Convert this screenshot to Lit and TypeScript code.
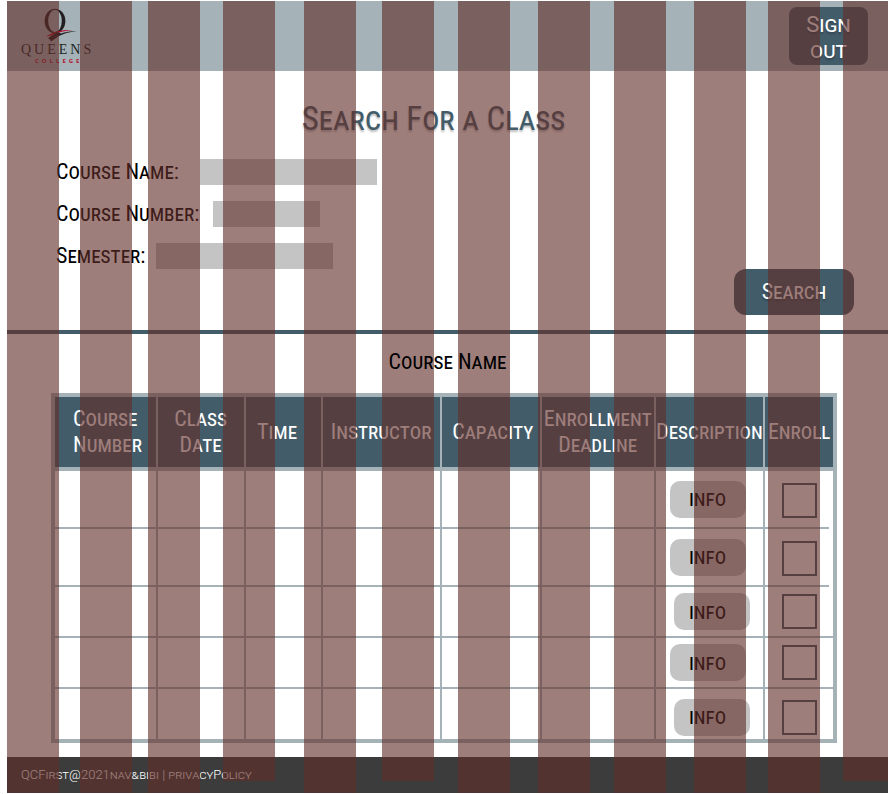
import { LitElement, html, css, svg } from "lit";
import { customElement, state } from "lit/decorators.js";

interface Row {
  height: "tall" | "short";
  nudge: boolean;
  open: boolean;
}

const COLUMNS = [
  { label: "Course Number", cls: "c-number" },
  { label: "Class Date", cls: "c-date" },
  { label: "Time", cls: "c-time" },
  { label: "Instructor", cls: "c-instructor" },
  { label: "Capacity", cls: "c-capacity" },
  { label: "Enrollment Deadline", cls: "c-deadline" },
  { label: "Description", cls: "c-description" },
  { label: "Enroll", cls: "c-enroll" },
];

const ROWS: Row[] = [
  { height: "tall", nudge: false, open: true },
  { height: "tall", nudge: false, open: true },
  { height: "short", nudge: true, open: false },
  { height: "short", nudge: false, open: false },
  { height: "short", nudge: true, open: false },
];

/* Twelve layout columns; true marks one that stops above the page end. */
const GUIDES = [false, false, false, true, false, true, false, false, false, false, false, true];

@customElement("qc-logo")
export class QcLogo extends LitElement {
  static styles = css`
    :host {
      display: block;
      width: 76px;
    }
    svg {
      display: block;
      width: 100%;
    }
    .ring {
      fill: #231f20;
      fill-rule: evenodd;
    }
    .queens {
      font: 14px "Liberation Serif", serif;
      letter-spacing: 3px;
      fill: #231f20;
    }
    .college {
      font: bold 6px "Open Sans", sans-serif;
      letter-spacing: 3px;
      fill: #b3122f;
    }
  `;

  render() {
    return html`<svg viewBox="0 0 76 60" role="img" aria-label="Queens College">
      ${svg`
        <path
          class="ring"
          d="M23.6 14 a10.4 12.2 0 1 0 20.8 0 a10.4 12.2 0 1 0 -20.8 0 Z
             M27.2 14 a6.8 11.2 0 1 1 13.6 0 a6.8 11.2 0 1 1 -13.6 0 Z"
        />
        <path d="M25 29.5 Q38 21 52 23.5 Q40 23.5 31 28.5 Q28 29 25 29.5 Z" fill="#b3122f" />
        <path d="M27 31 Q32 28 36 25 L40 26.5 Q46 24 56 24 Q44 25.5 38 29 L30 34.5 Q29 32 27 31 Z" fill="#231f20" />
        <text class="queens" x="0" y="47">QUEENS</text>
        <text class="college" x="14" y="56">COLLEGE</text>
      `}
    </svg>`;
  }
}

@customElement("app-root")
export class AppRoot extends LitElement {
  @state() private enrolled = ROWS.map(() => false);

  static styles = css`
    :host {
      display: block;
      padding: 1px 6px 0 7px;
      background: #fff;
      color: #000;
      font: 22px/28px "Roboto Condensed", "Roboto", sans-serif;
      font-variant: small-caps;
      --slate: #435c6a;
      --mist: #a5b2b8;
      --grey: #c4c4c4;
    }
    * {
      box-sizing: border-box;
    }
    button,
    input {
      font: inherit;
      margin: 0;
      border: 0;
    }
    button {
      cursor: pointer;
    }
    .page {
      position: relative;
      overflow: hidden;
    }
    header {
      display: flex;
      justify-content: space-between;
      align-items: flex-start;
      height: 70px;
      padding: 6px 20px 0 14px;
      background: var(--mist);
    }
    .solid {
      background: var(--slate);
      color: #fff;
      text-shadow: 0 2px 2px rgba(0, 0, 0, 0.25);
    }
    .sign-out {
      width: 79px;
      height: 58px;
      padding: 4px 14px 0;
      border-radius: 8px;
      font-family: "Roboto", sans-serif;
      line-height: 26px;
    }
    h1 {
      margin: 0;
      padding-top: 28px;
      padding-right: 28px;
      color: var(--slate);
      font-size: 33px;
      font-weight: 400;
      line-height: 40px;
      text-align: center;
      text-shadow: 0 2px 2px rgba(0, 0, 0, 0.25);
    }
    form {
      display: flex;
      justify-content: space-between;
      align-items: flex-end;
      height: 195px;
      padding: 0 34px 15px 49px;
      border-bottom: 4px solid var(--slate);
    }
    .fields {
      display: flex;
      flex-direction: column;
      gap: 16px;
      align-self: flex-start;
      padding-top: 20px;
    }
    .field {
      display: flex;
      align-items: center;
      height: 26px;
    }
    .field input {
      width: 177px;
      height: 26px;
      padding: 0 6px;
      background: var(--grey);
    }
    .field .short {
      width: 107px;
    }
    .name {
      gap: 21px;
    }
    .number {
      gap: 14px;
    }
    .semester {
      gap: 11px;
    }
    .search {
      width: 120px;
      height: 46px;
      border-radius: 12px;
    }
    h2 {
      position: relative;
      z-index: 2;
      margin: 0;
      padding: 14px 0 17px;
      font-size: 22px;
      font-weight: 400;
      line-height: 28px;
      text-align: center;
    }
    .results {
      margin: 0 51px 14px 44px;
    }
    table {
      width: 100%;
      table-layout: fixed;
      border-spacing: 0;
      border: 4px solid var(--mist);
    }
    th,
    td {
      padding: 0;
      border-right: 2px solid var(--mist);
      text-align: center;
      vertical-align: middle;
    }
    th {
      height: 74px;
      border-bottom: 4px solid var(--mist);
      background: var(--slate);
      color: #fff;
      font-weight: 400;
      line-height: 26px;
    }
    td {
      border-bottom: 2px solid var(--mist);
    }
    th:last-child,
    td:last-child {
      border-right: 0;
    }
    .open td:last-child {
      border-bottom: 0;
      background: linear-gradient(var(--mist), var(--mist)) left bottom / calc(100% - 4px) 2px
        no-repeat;
    }
    .tall td {
      height: 58px;
    }
    .short td {
      height: 51px;
    }
    tr:last-child td {
      height: 50px;
      padding-top: 6px;
      border-bottom: 0;
    }
    .c-number {
      width: 13.2%;
      padding-left: 18px;
      text-align: left;
    }
    .c-date {
      width: 11.3%;
    }
    .c-time {
      width: 9.9%;
      padding-right: 12px;
    }
    .c-instructor {
      width: 15.3%;
    }
    .c-capacity {
      width: 12.9%;
      padding-left: 4px;
    }
    .c-deadline {
      width: 14.6%;
    }
    .c-description {
      width: 14.1%;
    }
    .info {
      display: block;
      width: 76px;
      height: 37px;
      margin: 0 auto 0 14px;
      padding: 0;
      border-radius: 10px;
      background: var(--grey);
      color: #000;
    }
    .nudge .info {
      margin-left: 18px;
      padding-right: 8px;
    }
    .check {
      display: block;
      appearance: none;
      width: 35px;
      height: 35px;
      margin: 0 auto;
      border: 2px solid var(--slate);
    }
    .check:checked {
      background: var(--slate);
    }
    footer {
      display: flex;
      align-items: center;
      height: 36px;
      padding-left: 14px;
      background: #3c3c3c;
      color: #fff;
      font: 300 13px/16px "Roboto", sans-serif;
      font-variant: small-caps;
    }
    footer a {
      color: inherit;
      text-decoration: none;
    }
    .guides {
      position: absolute;
      inset: 0;
      z-index: 1;
      display: grid;
      grid-template-columns:
        52fr 21fr 52fr 16fr 52fr 23fr 52fr 29fr 52fr 26fr 52fr 24fr
        52fr 28fr 52fr 24fr 52fr 28fr 52fr 22fr 52fr 23fr 45fr;
      pointer-events: none;
    }
    .guide {
      background: rgba(97, 46, 41, 0.615);
    }
    .clipped {
      margin-bottom: 12px;
    }
  `;

  private toggle(index: number) {
    this.enrolled = this.enrolled.map((v, i) => (i === index ? !v : v));
  }

  render() {
    return html`
      <div class="page">
        <header>
          <qc-logo></qc-logo>
          <button class="solid sign-out" type="button">Sign out</button>
        </header>
        <main>
          <h1>Search For a Class</h1>
          <form @submit=${(e: Event) => e.preventDefault()}>
            <div class="fields">
              <div class="field name">
                <label for="course-name">Course Name:</label>
                <input id="course-name" type="text" />
              </div>
              <div class="field number">
                <label for="course-number">Course Number:</label>
                <input id="course-number" class="short" type="text" />
              </div>
              <div class="field semester">
                <label for="semester">Semester:</label>
                <input id="semester" type="text" />
              </div>
            </div>
            <button class="solid search" type="submit">Search</button>
          </form>
          <h2 id="results-title">Course Name</h2>
          <div class="results">
            <table aria-labelledby="results-title">
              <thead>
                <tr>
                  ${COLUMNS.map((c) => html`<th class=${c.cls} scope="col">${c.label}</th>`)}
                </tr>
              </thead>
              <tbody>
                ${ROWS.map(
                  (row, i) => html`<tr
                    class="${row.height} ${row.nudge ? "nudge" : ""} ${row.open ? "open" : ""}"
                  >
                    <td></td>
                    <td></td>
                    <td></td>
                    <td></td>
                    <td></td>
                    <td></td>
                    <td><button class="info" type="button">info</button></td>
                    <td>
                      <input
                        class="check"
                        type="checkbox"
                        aria-label="Enroll"
                        .checked=${this.enrolled[i]}
                        @change=${() => this.toggle(i)}
                      />
                    </td>
                  </tr>`
                )}
              </tbody>
            </table>
          </div>
        </main>
        <footer>
          <span>QCFirst@2021nav&amp;bibi | <a href="#privacy">privacyPolicy</a></span>
        </footer>
        <div class="guides" aria-hidden="true">
          ${GUIDES.map(
            (clipped, i) => html`${i ? html`<span></span>` : ""}<span
                class="guide ${clipped ? "clipped" : ""}"
              ></span>`
          )}
        </div>
      </div>
    `;
  }
}
